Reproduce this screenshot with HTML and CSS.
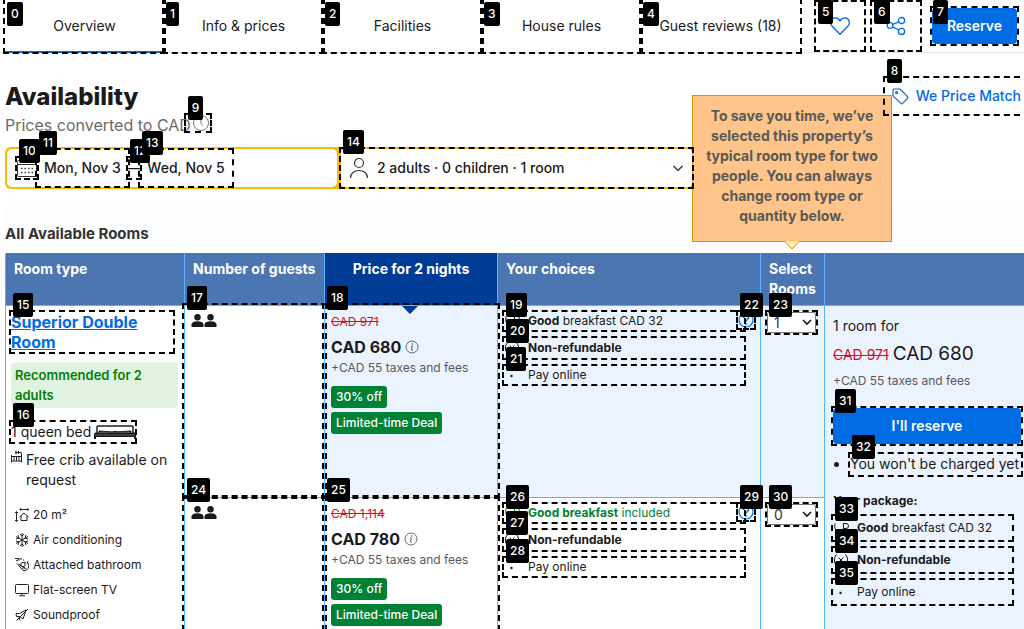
FILE: index.html
```html
<!DOCTYPE html>
<html lang="en">
<head>
<meta charset="utf-8">
<title>Availability</title>
<link rel="stylesheet" href="styles.css">
</head>
<body>
<svg class="defs" aria-hidden="true">
  <symbol id="info" viewBox="0 0 14 14"><circle cx="7" cy="7" r="6" fill="none" stroke="currentColor" stroke-width=".9"/><circle cx="7.6" cy="4" r=".8" fill="currentColor"/><path d="M6 6h1.3l-.8 4h1.2" fill="none" stroke="currentColor" stroke-width="1"/></symbol>
  <symbol id="guests" viewBox="0 0 26 13"><g fill="currentColor"><circle cx="6.500" cy="3.200" r="3.200"/><path d="M.5 13v-2.500c0-2 2-3.300 6-3.300s6 1.300 6 3.300V13z"/><circle cx="19.500" cy="3.200" r="3.200"/><path d="M13.500 13v-2.500c0-2 2-3.300 6-3.300s6 1.300 6 3.300V13z"/></g></symbol>
  <symbol id="cup" viewBox="0 0 16 16"><path d="M2 3.500Q.5 8 4 12.500h5M10.500 3v6.500M10.500 3.500H13a2 2 0 0 1 0 5h-2.500" fill="none" stroke="currentColor"/></symbol>
  <symbol id="nonref" viewBox="0 0 16 16"><path d="M3.500 2.500a8 8 0 0 0 0 11M12.500 2.500a8 8 0 0 1 0 11M5.500 5.500l5 5M10.500 5.500l-5 5" fill="none" stroke="currentColor"/></symbol>
  <symbol id="dot" viewBox="0 0 16 16"><circle cx="7.500" cy="9" r="1.200" fill="currentColor"/></symbol>
  <symbol id="help" viewBox="0 0 16 16"><circle cx="8" cy="8" r="7" fill="none" stroke="currentColor" stroke-width="1.200"/><path d="M5.500 6c0-3.500 5-3.200 5-.3C10.500 7.500 8 7.500 8 9.500" fill="none" stroke="currentColor" stroke-width="1.500"/><circle cx="8" cy="12" r="1" fill="currentColor"/></symbol>
  <symbol id="chev" viewBox="0 0 10 10"><path d="M1 3l4 4 4-4" fill="none" stroke="currentColor" stroke-width="1.700"/></symbol>
</svg>

<nav class="topnav">
  <div class="tabs">
    <a class="tab active" href="#overview">Overview<span class="box"><b class="tag">0</b></span></a>
    <a class="tab" href="#info">Info &amp; prices<span class="box"><b class="tag">1</b></span></a>
    <a class="tab" href="#facilities">Facilities<span class="box"><b class="tag">2</b></span></a>
    <a class="tab" href="#rules">House rules<span class="box"><b class="tag">3</b></span></a>
    <a class="tab" href="#reviews">Guest reviews (18)<span class="box"><b class="tag">4</b></span></a>
  </div>
  <button class="icon-btn" aria-label="Save"><svg width="20" height="20" viewBox="0 0 20 20" fill="none" stroke="currentColor" stroke-width="1.300"><path d="M10 18.200 1.800 9.800C-.5 7 .8 2.300 4.800 1.900c2.500-.2 4 1 5.200 2.900 1.200-1.900 2.700-3.100 5.200-2.900 4 .4 5.300 5.100 3 7.900z"/></svg><span class="box"><b class="tag">5</b></span></button>
  <button class="icon-btn" aria-label="Share"><svg width="20" height="20" viewBox="0 0 20 20" fill="none" stroke="currentColor" stroke-width="1.300"><circle cx="4" cy="9.500" r="2.900"/><circle cx="15.500" cy="4.600" r="3.100"/><circle cx="15.500" cy="15.400" r="3.100"/><path d="M6.700 8.500 12.600 5.900M6.500 10.900l6.300 3.100"/></svg><span class="box"><b class="tag">6</b></span></button>
  <button class="btn reserve">Reserve<span class="box"><b class="tag">7</b></span></button>
</nav>

<main>
  <header class="heading">
    <div>
      <h1>Availability</h1>
      <p class="converted">Prices converted to CAD <button class="clock" aria-label="Rate details"><svg width="18" height="18" viewBox="0 0 18 18" fill="none" stroke="#777"><circle cx="9" cy="9" r="7.500"/><path d="M9 4v5.500l1.500 2"/></svg><span class="box"><b class="tag">9</b></span></button></p>
    </div>
    <a class="match" href="#match"><svg width="17" height="17" viewBox="0 0 17 17" fill="none" stroke="currentColor" stroke-width="1.200"><path d="M2 1h5.300c.5 0 .9.200 1.200.5l7 7.200c.5.500.5 1.200 0 1.700l-5 5c-.5.500-1.200.500-1.700 0l-7.200-7C1.300 8 1 7.500 1 7V2c0-.6.400-1 1-1z"/><circle cx="4.600" cy="4.600" r="1"/></svg>We Price Match<span class="box"><b class="tag">8</b></span></a>
  </header>

  <div class="search">
    <div class="dates">
      <button class="cal" aria-label="Calendar"><svg width="20" height="20" viewBox="0 0 20 20" fill="none" stroke="#333"><rect x=".5" y="2.500" width="19" height="16" rx="1"/><path d="M1 6.500h18M5 0v4M15 0v4"/><path d="M4 10.500h13M4 14.500h13" stroke-width="1.500" stroke-dasharray="1.500 2"/></svg><span class="box"><b class="tag">10</b></span></button>
      <button class="date">Mon, Nov 3<span class="box"><b class="tag">11</b></span></button>
      <span class="dash">—<span class="box"><b class="tag">12</b></span></span>
      <button class="date">Wed, Nov 5<span class="box"><b class="tag">13</b></span></button>
    </div>
    <button class="occupancy"><svg width="20" height="22" viewBox="0 0 20 22" fill="none" stroke="#333" stroke-width="1.200"><circle cx="10" cy="6" r="4.500"/><path d="M1.500 21c0-4.500 3.500-7.500 8.500-7.500s8.500 3 8.500 7.500"/></svg><span>2 adults · 0 children · 1 room</span><svg class="end" width="12" height="12" viewBox="0 0 12 12" fill="none" stroke="#222" stroke-width="1.200"><path d="M1.500 4 6 8.500 10.500 4"/></svg><span class="box"><b class="tag">14</b></span></button>
  </div>

  <section class="rooms">
    <h2>All Available Rooms</h2>
    <table>
      <colgroup><col class="c-type"><col class="c-guests"><col class="c-price"><col class="c-choices"><col class="c-select"><col></colgroup>
      <thead>
        <tr>
          <th>Room type</th><th>Number of guests</th><th class="price-head">Price for 2 nights</th><th>Your choices</th>
          <th class="select-head">Select Rooms<div class="tip">To save you time, we’ve selected this property’s typical room type for two people. You can always change room type or quantity below.<svg width="16" height="9" viewBox="0 0 16 9"><path d="M.5 0 8 8 15.500 0" fill="#ffeda8" stroke="#d69200"/></svg></div></th>
          <th></th>
        </tr>
      </thead>
      <tbody>
        <tr class="picked">
          <td class="room" rowspan="2">
            <a class="name" href="#room">Superior Double Room<span class="box"><b class="tag">15</b></span></a>
            <p class="recommended">Recommended for 2 adults</p>
            <p class="bed">1 queen bed <svg width="42" height="15" viewBox="0 0 42 15"><path d="M3 8V2q0-1 1-1h34q1 0 1 1v6" fill="none" stroke="#222" stroke-width="1.500"/><path d="M5 7.500V6q14 2 32 0v1.500M19 6.500h4" fill="#1a1a1a" stroke="#222"/><path d="M1 7.500h40l1 1.500v5h-2v-2H2v2H0V9z" fill="#1a1a1a"/><path d="M1 10h40" stroke="#999" stroke-width=".6"/></svg><span class="box"><b class="tag">16</b></span></p>
            <p class="crib"><svg width="11" height="13" viewBox="0 0 11 13" fill="none" stroke="#222"><path d="M.5 5v7.500M10.500 3v9.500M.5 6.500h10M.5 11h10M3 7v4M5.500 7v4M8 7v4M4 2.500h6.500M5 .5v4M7.500 1v3"/></svg><span>Free crib available on request</span></p>
            <ul class="amenities">
              <li><svg width="14" height="14" viewBox="0 0 14 14" fill="none" stroke="#222"><path d="M5 1.500h8.500M6 .2 4.700 1.500 6 2.800M12.500.2l1.300 1.300-1.300 1.300M1.500 4v9M0 5l1.500-1.500L3 5M0 12l1.500 1.500L3 12M4.500 9 9 5l4.500 4M6 8v4.500h6V8"/></svg>20 m²</li>
              <li><svg width="14" height="14" viewBox="0 0 14 14" fill="none" stroke="#222"><path d="M7 0v14M1 3.500l12 7M13 3.500l-12 7M4.800 1 7 3l2.200-2M4.800 13 7 11l2.200 2M1 6l2.800-.8L3.200 2M13 6l-2.800-.8.600-3.200M1 8l2.800.8-.6 3.200M13 8l-2.800.8.600 3.200"/></svg>Air conditioning</li>
              <li><svg width="14" height="14" viewBox="0 0 14 14" fill="none" stroke="#222"><path d="M0 .5h4v2M1 3l3-1.500M5 1h2M8 2h1M2 5.500l6 7q3 1.500 5-2t-.5-6M3.500 6l8 5M10 3.500v2M13 3l-1 3"/><circle cx="8" cy="6.500" r="2.200"/><path d="M7 10h3"/></svg>Attached bathroom</li>
              <li><svg width="14" height="14" viewBox="0 0 14 14" fill="none" stroke="#222"><rect x=".5" y="1.500" width="13" height="9" rx="1"/><path d="M7 10.500v2M4 12.800h6"/></svg>Flat-screen TV</li>
              <li><svg width="14" height="14" viewBox="0 0 14 14" fill="none" stroke="#222"><path d="M1 5.500h3.500L11 2 8 11 4.500 8.500H1.500zM1.500 12.500 13 1M4 9l1 3.500"/></svg>Soundproof</li>
            </ul>
          </td>
          <td class="guests"><svg width="26" height="13" role="img" aria-label="2 guests"><use href="#guests"/></svg><span class="box cell"><b class="tag">17</b></span></td>
          <td class="price"><svg class="pointer" width="16" height="8" viewBox="0 0 16 8"><path d="M0 0h16L8 8z" fill="#003b95"/></svg>
            <s>CAD 971</s>
            <p class="amount">CAD 680 <svg width="14" height="14"><use href="#info"/></svg></p>
            <p class="tax">+CAD 55 taxes and fees</p>
            <p class="deals"><span>30% off</span><span>Limited-time Deal</span></p>
            <span class="box cell"><b class="tag">18</b></span></td>
          <td class="choices">
            <ul class="perks">
              <li><svg><use href="#cup"/></svg><span><b>Good</b> breakfast CAD 32</span><span class="box"><b class="tag">19</b></span></li>
              <li class="mid"><svg><use href="#nonref"/></svg><b>Non-refundable</b><span class="box"><b class="tag">20</b></span></li>
              <li><svg><use href="#dot"/></svg><span>Pay online</span><span class="box"><b class="tag">21</b></span></li>
            </ul>
            <button class="help" aria-label="More about these conditions"><svg><use href="#help"/></svg><span class="box"><b class="tag">22</b></span></button>
          </td>
          <td class="qty"><label><select aria-label="Rooms, non-refundable"><option>1</option><option>0</option></select><svg><use href="#chev"/></svg><span class="box"><b class="tag">23</b></span></label></td>
          <td class="summary" rowspan="2">
            <p class="count">1 room for</p>
            <p class="total"><s>CAD 971</s> <span>CAD 680</span></p>
            <p class="tax">+CAD 55 taxes and fees</p>
            <button class="btn go">I'll reserve<span class="box"><b class="tag">31</b></span></button>
            <ul class="notes"><li><p>You won't be charged yet<span class="box"><b class="tag">32</b></span></p></li></ul>
            <h3>Your package:</h3>
            <ul class="perks roomy">
              <li><svg><use href="#cup"/></svg><span><b>Good</b> breakfast CAD 32</span><span class="box"><b class="tag">33</b></span></li>
              <li><svg><use href="#nonref"/></svg><b>Non-refundable</b><span class="box"><b class="tag">34</b></span></li>
              <li><svg><use href="#dot"/></svg><span>Pay online</span><span class="box"><b class="tag">35</b></span></li>
            </ul>
          </td>
        </tr>
        <tr>
          <td class="guests"><svg width="26" height="13" role="img" aria-label="2 guests"><use href="#guests"/></svg><span class="box cell"><b class="tag">24</b></span></td>
          <td class="price">
            <s>CAD 1,114</s>
            <p class="amount">CAD 780 <svg width="14" height="14"><use href="#info"/></svg></p>
            <p class="tax">+CAD 55 taxes and fees</p>
            <p class="deals"><span>30% off</span><span>Limited-time Deal</span></p>
            <span class="box cell"><b class="tag">25</b></span></td>
          <td class="choices">
            <ul class="perks">
              <li class="included"><svg><use href="#cup"/></svg><span><b>Good breakfast</b> included</span><span class="box"><b class="tag">26</b></span></li>
              <li class="mid"><svg><use href="#nonref"/></svg><b>Non-refundable</b><span class="box"><b class="tag">27</b></span></li>
              <li><svg><use href="#dot"/></svg><span>Pay online</span><span class="box"><b class="tag">28</b></span></li>
            </ul>
            <button class="help" aria-label="More about these conditions"><svg><use href="#help"/></svg><span class="box"><b class="tag">29</b></span></button>
          </td>
          <td class="qty"><label><select aria-label="Rooms, breakfast included"><option>0</option><option>1</option></select><svg><use href="#chev"/></svg><span class="box"><b class="tag">30</b></span></label></td>
        </tr>
      </tbody>
    </table>
  </section>
</main>
</body>
</html>
```

FILE: styles.css
```css
* { box-sizing: border-box; }
html { overflow: hidden; }
body { margin: 0; font: 14px/20px Inter, sans-serif; color: #1a1a1a; background: #fff; }
h1, h2, h3, p, ul { margin: 0; padding: 0; }
ul { list-style: none; }
button { font: inherit; color: inherit; background: none; border: 0; padding: 0; }
svg { flex: none; }
.defs { position: absolute; width: 0; height: 0; }

/* numbered element markers */
.box { position: absolute; inset: -2px; border: 2px dashed #000; z-index: 10; pointer-events: none; }
.tag { position: absolute; top: -19px; left: 2px; height: 24px; padding: 0 4px; border-radius: 2px; background: #000; color: #fff; font: 500 12px/24px Inter, sans-serif; text-align: left; }

.topnav { display: flex; align-items: center; height: 53px; padding: 0 7px 0 5px; border-bottom: 1px solid #e7e7e7; }
.tabs { display: flex; flex: 1; margin-right: 16px; height: 53px; }
.tab { position: relative; flex: 1; display: flex; align-items: center; justify-content: center; color: inherit; text-decoration: none; }
.tab.active { box-shadow: inset 0 -2px #006ce4; }
.tab .box { bottom: -1px; }
.tab .tag { top: 2px; left: 2px; }
.icon-btn { position: relative; display: grid; place-items: center; width: 48px; height: 48px; margin-right: 8px; color: #006ce4; }
.icon-btn .tag { top: -2px; }
.btn { position: relative; background: #006ce4; color: #fff; font-weight: 600; height: 36px; border-radius: 4px; }
.reserve { width: 85px; margin-left: 4px; }
.reserve .tag { top: -8px; left: 1px; }

main { padding-left: 5px; }
.heading { display: flex; justify-content: space-between; padding-top: 25px; }
h1 { font-size: 24px; line-height: 37px; font-weight: 800; }
.converted { display: flex; align-items: center; height: 20px; font-size: 16px; line-height: 20px; color: #6b6b6b; }
.clock { position: relative; width: 24px; height: 16px; margin: -4px 0 0 -5px; display: flex; justify-content: flex-end; align-items: center; }
.match { position: relative; display: flex; align-items: center; gap: 7px; height: 36px; padding: 0 3px 0 7px; color: #006ce4; font-weight: 500; text-decoration: none; }
.match .box { right: -6px; }

.search { display: flex; gap: 4px; width: 689px; margin-top: 12px; padding: 2px; background: #ffb700; border-radius: 6px; }
.dates { flex: 0 0 330px; display: flex; align-items: center; height: 38px; padding-left: 10px; background: #fff; border-radius: 5px; font-weight: 450; }
.cal { position: relative; width: 20px; height: 20px; }
.cal svg { display: block; }
.date { position: relative; width: 91px; height: 36px; }
.dash { position: relative; width: 12px; height: 20px; text-align: center; }
.date:last-child { width: 92px; }
.occupancy { position: relative; flex: 1; display: flex; align-items: center; gap: 8px; padding: 0 8px; background: #fff; border-radius: 4px; font-weight: 450; }
.occupancy .end { margin-left: auto; }
.occupancy .box { top: -2px; }

.rooms { margin-top: 18px; background: #fcfdff; }
h2 { padding: 17px 0 9px; font-size: 15px; line-height: 20px; font-weight: 700; color: #333; }
table { width: 100%; table-layout: fixed; border-collapse: separate; border-spacing: 0; background: #fff; }
.c-type { width: 179px; }
.c-guests { width: 140px; }
.c-price { width: 173px; }
.c-choices { width: 263px; }
.c-select { width: 64px; }
th, td { position: relative; vertical-align: top; text-align: left; border-left: 1px solid #57b2ff; border-bottom: 1px solid #57b2ff; }
th { height: 52px; padding: 6px 8px; background: #4c76b2; color: #fff; font-weight: 700; }
.price-head { background: #003b95; text-align: center; }
td { height: 192px; padding: 6px; }
.picked td { background: #ebf3ff; }
.picked .room, .picked .guests { background: #fff; }
.tip { position: absolute; z-index: 5; bottom: calc(100% + 11px); left: -69px; width: 200px; padding: 10px 12px 15px; border: 1px solid #d69200; background: #ffc489; color: #595959; text-align: center; font-weight: 700; }
.tip svg { position: absolute; top: 100%; left: 91px; }
.pointer { position: absolute; top: 0; left: 77px; }
.cell { inset: -3px -3px -2px; }
.cell .tag { left: 3px; }

.room { padding: 6px 6px 6px 5px; }
.name { position: relative; display: block; width: 162px; font-size: 16px; font-weight: 700; color: #006ce4; }
.recommended { margin-top: 10px; padding: 3px 4px; background: #e0f3e0; border-radius: 4px; color: #008009; font-size: 13px; font-weight: 600; }
.bed { position: relative; display: flex; align-items: center; gap: 3px; width: 124px; margin-top: 14px; white-space: nowrap; }
.crib { display: flex; gap: 4px; margin-top: 8px; }
.amenities { padding: 12px 0 0 4px; font-size: 12px; line-height: 25px; }
.amenities li { display: flex; align-items: center; gap: 4px; }
.price s, .total s { color: #d4111e; }
.price s { display: block; font-size: 12px; }
.amount { display: flex; align-items: center; gap: 4px; height: 29px; font-size: 16px; font-weight: 700; }
.amount svg, .tax { color: #595959; }
.tax { font-size: 12px; line-height: 14px; }
.deals { display: flex; flex-direction: column; align-items: flex-start; gap: 4px; margin-top: 11px; font-size: 12px; line-height: 22px; font-weight: 500; color: #fff; }
.deals span { padding: 0 5px; border-radius: 3px; background: #008234; }
.perks { font-size: 12px; width: 240px; display: flex; flex-direction: column; gap: 8px; }
.perks li { position: relative; display: flex; align-items: center; gap: 8px; height: 18px; }
.perks li.mid { height: 20px; }
.perks svg { width: 16px; height: 16px; }
.perks b { font-weight: 700; }
.perks .tag { font-weight: 500; }
.included { color: #008234; }
.help { position: absolute; top: 6px; left: 240px; width: 16px; height: 16px; color: #006ce4; }
.help svg { display: block; width: 16px; height: 16px; }
.qty label { position: relative; display: block; width: 49px; height: 21px; }
.qty select { appearance: none; display: block; width: 49px; height: 21px; padding: 0 6px; border: 1px solid #767676; border-radius: 2px; background: #fff; color: #333; font: 14px Inter, sans-serif; }
.qty svg { position: absolute; right: 4px; top: 5px; width: 10px; height: 10px; }
.summary { padding: 10px 3px 0 8px; }
.total { margin-top: 6px; line-height: 24px; }
.total s { font-size: 14px; }
.total span { font-size: 19px; }
.summary .tax { margin-top: 7px; }
.go { display: block; width: 100%; margin-top: 20px; }
.notes { list-style: disc; margin-top: 10px; padding-left: 17px; }
.notes p { position: relative; height: 21px; white-space: nowrap; }
h3 { margin: 16px 0 8px; font-size: 12px; line-height: 20px; font-weight: 700; }
.perks.roomy { width: 179px; margin-top: -3px; }
.perks.roomy li { height: 24px; }
```
